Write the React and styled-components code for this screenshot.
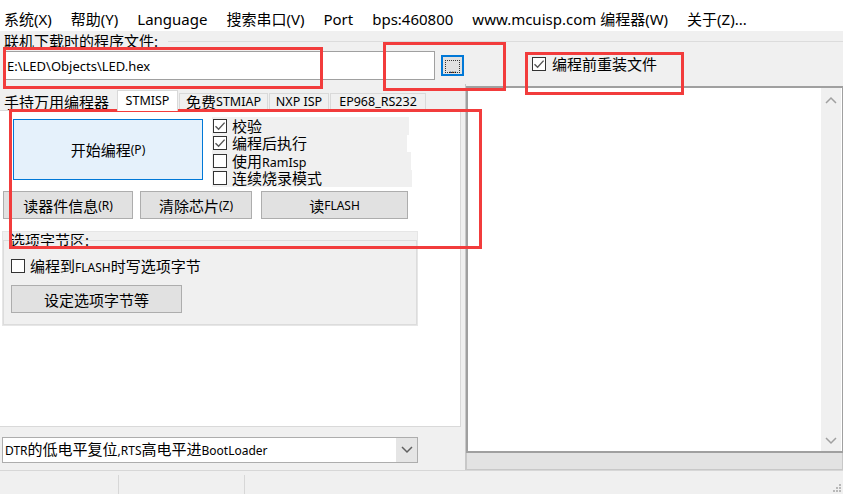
import React from 'react';
import styled, { createGlobalStyle } from 'styled-components';

const GlobalStyle = createGlobalStyle`
  html, body { margin: 0; padding: 0; }
  body {
    font-family: "Noto Sans", "Noto Sans CJK SC", sans-serif;
    background: #f0f0f0;
    color: #000;
  }
`;

const Window = styled.div`
  position: relative;
  width: 843px;
  height: 494px;
  overflow: hidden;
  display: flex;
  flex-direction: column;
  background: #f0f0f0;
  font-size: 15px;
`;

const En = styled.span`
  font-family: "Noto Sans", sans-serif;
  font-size: ${p => p.$size || 12}px;
`;

/* menu */
const MenuBar = styled.div`
  height: 31px;
  box-sizing: border-box;
  padding: 8px 0 0 4px;
  background: #fff;
  display: flex;
  align-items: center;
  font-size: 15px;
`;
const MenuItem = styled.span`
  margin-right: ${p => p.$gap}px;
  white-space: nowrap;
  line-height: 23px;
`;

/* file group */
const FileGroup = styled.div`
  height: 53px;
  box-sizing: border-box;
  padding-top: 1px;
`;
const GroupLabelRow = styled.div`
  display: flex;
  align-items: center;
  height: 18px;
  padding-left: 4px;
  line-height: 18px;
  white-space: nowrap;
`;
const GroupLine = styled.div`
  flex: 1;
  margin-left: 10px;
  border-top: 1px solid #dcdcdc;
`;
const InputRow = styled.div`
  display: flex;
  align-items: center;
  padding-left: 3px;
  margin-top: 1px;
`;
const PathInput = styled.div`
  width: 432px;
  height: 29px;
  box-sizing: border-box;
  border: 1px solid #a0a0a0;
  background: #fff;
  display: flex;
  align-items: center;
  padding-left: 3px;
  color: #000;
`;
const DotsButton = styled.div`
  margin-left: 6px;
  width: 23px;
  height: 21px;
  box-sizing: border-box;
  border: 2px solid #0078d7;
  background: #e1e1e1;
  display: flex;
  align-items: flex-end;
  justify-content: center;
  span {
    display: block;
    width: 15px;
    height: 13px;
    margin-bottom: 1px;
    border: 1px dotted #333;
    font-size: 11px;
    line-height: 15px;
    text-align: center;
    letter-spacing: -0.5px;
    box-sizing: border-box;
  }
`;
const ReloadCheck = styled.label`
  margin-left: 68px;
  display: flex;
  align-items: center;
  gap: 6px;
  margin-top: -4px;
`;

/* checkbox */
const Box = styled.span`
  width: 14px;
  height: 14px;
  box-sizing: border-box;
  border: 1px solid #333;
  background: #fff;
  flex: none;
  display: flex;
  align-items: center;
  justify-content: center;
`;
const Check = ({ on }) => (
  <Box>
    {on && (
      <svg width="12" height="12" viewBox="0 0 12 12">
        <path d="M1.5 6.2 L4.6 9.2 L10.6 2.6" fill="none" stroke="#555" strokeWidth="1.4" />
      </svg>
    )}
  </Box>
);
const Text = styled.span`
  display: inline-block;
  height: 16px;
  line-height: 16px;
  white-space: nowrap;
`;

/* main area */
const Main = styled.div`
  flex: 1;
  display: flex;
  min-height: 0;
`;
const LeftPane = styled.div`
  width: 461px;
  display: flex;
  flex-direction: column;
`;
const TabBar = styled.div`
  margin-top: 6px;
  height: 20px;
  display: flex;
  align-items: flex-end;
`;
const Tab = styled.div`
  height: ${p => (p.$active ? 21 : 17)}px;
  box-sizing: border-box;
  margin-bottom: ${p => (p.$active ? -1 : 0)}px;
  width: ${p => p.$w}px;
  margin-left: ${p => p.$ml ?? 0}px;
  padding-left: ${p => p.$padL ?? 0}px;
  border: 1px solid ${p => (p.$plain ? 'transparent' : '#d9d9d9')};
  border-bottom: none;
  background: ${p => (p.$active ? '#fff' : '#f0f0f0')};
  display: flex;
  align-items: center;
  justify-content: ${p => (p.$padL != null ? 'flex-start' : 'center')};
  white-space: nowrap;
  line-height: 16px;
  position: relative;
  z-index: ${p => (p.$active ? 1 : 0)};
`;
const TabPanel = styled.div`
  flex: 1;
  background: #fff;
  border-top: 1px solid #d9d9d9;
  border-right: 1px solid #d9d9d9;
  border-bottom: 1px solid #d9d9d9;
  display: flex;
  flex-direction: column;
`;
const TopRow = styled.div`
  height: 72px;
  margin-top: 8px;
  display: flex;
  align-items: flex-start;
`;
const ProgramButton = styled.div`
  margin-left: 13px;
  width: 190px;
  height: 61px;
  box-sizing: border-box;
  border: 1px solid #0078d7;
  background: #e5f1fb;
  display: flex;
  align-items: center;
  justify-content: center;
`;
const CheckList = styled.div`
  margin-left: 9px;
  margin-top: -2px;
  display: flex;
  flex-direction: column;
`;
const CheckRow = styled.label`
  width: ${p => p.$w}px;
  height: 17.5px;
  background: #f0f0f0;
  display: flex;
  align-items: center;
  gap: 5px;
  padding-left: 1px;
  line-height: 16px;
`;
const ButtonRow = styled.div`
  display: flex;
  padding-left: 3px;
`;
const Button = styled.div`
  width: ${p => p.$w}px;
  margin-left: ${p => p.$ml || 0}px;
  margin-top: ${p => p.$mt || 0}px;
  height: 28px;
  box-sizing: border-box;
  border: 1px solid #adadad;
  background: #e1e1e1;
  display: flex;
  align-items: center;
  justify-content: center;
  white-space: nowrap;
`;
const GroupBox = styled.div`
  margin: 12px 0 0 2px;
  width: 416px;
  height: 95px;
  box-sizing: border-box;
  background: #f0f0f0;
  border: 1px solid #e6e6e6;
  display: flex;
  flex-direction: column;
`;
const GroupTitle = styled.div`
  height: 8px;
  padding-left: 7px;
  line-height: 16px;
  white-space: nowrap;
`;
const GroupFrame = styled.div`
  flex: 1;
  border: 1px solid #dcdcdc;
  padding: 17px 0 0 7px;
  display: flex;
  flex-direction: column;
`;
const OptRow = styled.label`
  display: flex;
  align-items: center;
  gap: 5px;
  line-height: 16px;
`;
const ComboArea = styled.div`
  height: 43px;
  box-sizing: border-box;
  padding: 10px 0 0 2px;
`;
const Combo = styled.div`
  width: 416px;
  height: 26px;
  box-sizing: border-box;
  border: 1px solid #adadad;
  background: #fff;
  display: flex;
  align-items: center;
  white-space: nowrap;
`;
const ComboText = styled.span`
  flex: 1;
  padding-left: 2px;
  line-height: 16px;
`;
const ComboDrop = styled.span`
  width: 21px;
  align-self: stretch;
  background: #e5e5e5;
  display: flex;
  align-items: center;
  justify-content: center;
`;

const Splitter = styled.div`
  width: 5px;
  border-right: 1px solid #c8c8c8;
  box-sizing: border-box;
`;
const RightPane = styled.div`
  flex: 1;
  display: flex;
  flex-direction: column;
  padding-top: 2px;
`;
const LogBox = styled.div`
  flex: 1;
  border: 2px solid #a0a0a0;
  border-right-width: 1px;
  background: #fff;
  display: flex;
  justify-content: flex-end;
  padding: 0 1px 0 0;
`;
const ScrollBar = styled.div`
  width: 20px;
  background: #f0f0f0;
  display: flex;
  flex-direction: column;
  justify-content: space-between;
  align-items: center;
  padding: 8px 0 6px;
`;
const Strip = styled.div`
  height: 17px;
  box-sizing: border-box;
  background: #e3e3e3;
  border: 1px solid #c8c8c8;
  border-top: none;
`;
const StatusBar = styled.div`
  height: 24px;
  box-sizing: border-box;
  border-top: 1px solid #d7d7d7;
  display: flex;
  position: relative;
`;
const StatusCell = styled.div`
  width: ${p => p.$w}px;
  margin-top: 4px;
  border-right: 1px solid #d7d7d7;
`;
const Grip = styled.svg`
  position: absolute;
  right: 2px;
  bottom: 2px;
`;

/* screenshot annotations drawn over the window */
const Mark = styled.div`
  position: absolute;
  box-sizing: border-box;
  border: 3px solid #f23c3c;
  pointer-events: none;
  left: ${p => p.$x}px;
  top: ${p => p.$y}px;
  width: ${p => p.$w}px;
  height: ${p => p.$h}px;
`;

const Chevron = ({ up, color = '#a0a0a0' }) => (
  <svg width="12" height="8" viewBox="0 0 12 8">
    <path d={up ? 'M1 7 L6 2 L11 7' : 'M1 1 L6 6 L11 1'} fill="none" stroke={color} strokeWidth="1.5" />
  </svg>
);

const App = () => (
  <>
    <GlobalStyle />
    <Window>
      <MenuBar>
        <MenuItem $gap={19}>系统(X)</MenuItem>
        <MenuItem $gap={19}>帮助(Y)</MenuItem>
        <MenuItem $gap={19}>Language</MenuItem>
        <MenuItem $gap={19}>搜索串口(V)</MenuItem>
        <MenuItem $gap={19}>Port</MenuItem>
        <MenuItem $gap={19}>bps:460800</MenuItem>
        <MenuItem $gap={19}>www.mcuisp.com 编程器(W)</MenuItem>
        <MenuItem $gap={0}>关于(Z)...</MenuItem>
      </MenuBar>

      <FileGroup>
        <GroupLabelRow>
          联机下载时的程序文件:
          <GroupLine />
        </GroupLabelRow>
        <InputRow>
          <PathInput><En $size={13}>E:\LED\Objects\LED.hex</En></PathInput>
          <DotsButton><span>...</span></DotsButton>
          <ReloadCheck><Check on /><Text>编程前重装文件</Text></ReloadCheck>
        </InputRow>
      </FileGroup>

      <Main>
        <LeftPane>
          <TabBar>
            <Tab $plain $padL={3} $w={115}>手持万用编程器</Tab>
            <Tab $active $ml={2} $w={61}><En $size={12.5}>STMISP</En></Tab>
            <Tab $ml={1} $w={89}>免费<En $size={12.5}>STMIAP</En></Tab>
            <Tab $ml={1} $w={60}><En $size={12.5}>NXP ISP</En></Tab>
            <Tab $ml={1} $w={96}><En $size={12.5}>EP968_RS232</En></Tab>
          </TabBar>
          <TabPanel>
            <TopRow>
              <ProgramButton>开始编程<En>(P)</En></ProgramButton>
              <CheckList>
                <CheckRow $w={196}><Check on /><Text>校验</Text></CheckRow>
                <CheckRow $w={194}><Check on /><Text>编程后执行</Text></CheckRow>
                <CheckRow $w={198}><Check /><Text>使用<En $size={12.5}>RamIsp</En></Text></CheckRow>
                <CheckRow $w={199}><Check /><Text>连续烧录模式</Text></CheckRow>
              </CheckList>
            </TopRow>
            <ButtonRow>
              <Button $w={130}>读器件信息<En>(R)</En></Button>
              <Button $w={112} $ml={7}>清除芯片<En>(Z)</En></Button>
              <Button $w={147} $ml={9}>读<En>FLASH</En></Button>
            </ButtonRow>
            <GroupBox>
              <GroupTitle>选项字节区:</GroupTitle>
              <GroupFrame>
                <OptRow><Check /><Text>编程到<En>FLASH</En>时写选项字节</Text></OptRow>
                <Button $w={171} $mt={11}>设定选项字节等</Button>
              </GroupFrame>
            </GroupBox>
          </TabPanel>
          <ComboArea>
            <Combo>
              <ComboText><En>DTR</En>的低电平复位<En>,RTS</En>高电平进<En>BootLoader</En></ComboText>
              <ComboDrop><Chevron color="#606060" /></ComboDrop>
            </Combo>
          </ComboArea>
        </LeftPane>
        <Splitter />
        <RightPane>
          <LogBox>
            <ScrollBar>
              <Chevron up />
              <Chevron />
            </ScrollBar>
          </LogBox>
          <Strip />
        </RightPane>
      </Main>

      <StatusBar>
        <StatusCell $w={118} />
        <StatusCell $w={125} />
        <Grip width="8" height="8" viewBox="0 0 8 8">
          <rect x="6" y="0" width="2" height="2" fill="#b8b8b8" />
          <rect x="3" y="3" width="2" height="2" fill="#b8b8b8" />
          <rect x="6" y="3" width="2" height="2" fill="#b8b8b8" />
          <rect x="0" y="6" width="2" height="2" fill="#b8b8b8" />
          <rect x="3" y="6" width="2" height="2" fill="#b8b8b8" />
          <rect x="6" y="6" width="2" height="2" fill="#b8b8b8" />
        </Grip>
      </StatusBar>

      <Mark $x={3} $y={47} $w={320} $h={42} />
      <Mark $x={383} $y={42} $w={123} $h={49} />
      <Mark $x={525} $y={52} $w={159} $h={43} />
      <Mark $x={9} $y={109} $w={473} $h={140} />
    </Window>
  </>
);

export default App;
